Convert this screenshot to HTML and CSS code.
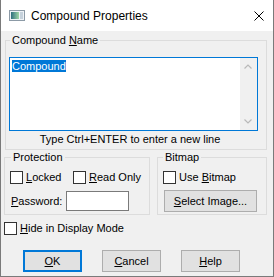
FILE: index.html
```html
<!DOCTYPE html>
<html lang="en">

<head>
    <meta charset="UTF-8">
    <title>Compound Properties</title>

    <!-- Styles -->
    <link rel="stylesheet" href="styles.css">
</head>
<body>

    <div class="window">

        <!-- Title bar -->
        <header class="titlebar">
            <svg class="app-icon" width="16" height="11" viewBox="0 0 16 11">
                <defs>
                    <linearGradient id="pane" x1="0" y1="0" x2="1" y2="0">
                        <stop offset="0" stop-color="#2f6f7f" />
                        <stop offset="1" stop-color="#9fd6a6" />
                    </linearGradient>
                </defs>
                <rect x="0.5" y="0.5" width="15" height="10" fill="#eef2f6" stroke="#8c9aa6" />
                <rect x="2" y="2" width="8" height="7" fill="url(#pane)" />
                <rect x="11" y="2" width="3" height="7" fill="#c6d2dc" />
            </svg>
            <span class="title">Compound Properties</span>
            <svg class="close" width="10" height="10" viewBox="0 0 10 10">
                <path d="M0.5 0.5 L9.5 9.5 M9.5 0.5 L0.5 9.5" stroke="#000" stroke-width="1" fill="none" />
            </svg>
        </header>

        <div class="client">

            <!-- Name -->
            <fieldset class="group name-group">
                <legend>Compound <u>N</u>ame</legend>
                <div class="textbox">
                    <div class="textbox-text"><span class="selected">Compound</span></div>
                    <div class="scrollbar">
                        <svg width="17" height="17" viewBox="0 0 17 17">
                            <path d="M4.5 10.5 L8 7 L11.5 10.5" stroke="#b9b9b9" stroke-width="1.2" fill="none" />
                        </svg>
                        <svg width="17" height="17" viewBox="0 0 17 17">
                            <path d="M4.5 6.5 L8 10 L11.5 6.5" stroke="#b9b9b9" stroke-width="1.2" fill="none" />
                        </svg>
                    </div>
                </div>
                <p class="hint">Type Ctrl+ENTER to enter a new line</p>
            </fieldset>

            <div class="group-row">

                <!-- Protection -->
                <fieldset class="group protection">
                    <legend>Protection</legend>
                    <div class="check-row">
                        <label class="check locked"><span class="box"></span><span><u>L</u>ocked</span></label>
                        <label class="check"><span class="box"></span><span><u>R</u>ead Only</span></label>
                    </div>
                    <div class="password-row">
                        <span class="field-label"><u>P</u>assword:</span>
                        <span class="input"></span>
                    </div>
                </fieldset>

                <!-- Bitmap -->
                <fieldset class="group bitmap">
                    <legend>Bitmap</legend>
                    <div class="check-row">
                        <label class="check"><span class="box"></span><span>Use <u>B</u>itmap</span></label>
                    </div>
                    <button class="btn select-btn"><u>S</u>elect Image...</button>
                </fieldset>
            </div>

            <label class="check hide-check"><span class="box"></span><span><u>H</u>ide in Display Mode</span></label>

            <!-- Dialog buttons -->
            <div class="buttons">
                <button class="btn default"><u>O</u>K</button>
                <button class="btn"><u>C</u>ancel</button>
                <button class="btn"><u>H</u>elp</button>
            </div>
        </div>
    </div>

</body>
</html>
```

FILE: styles.css
```css
:root {
    --face: #f0f0f0;
    --group-border: #dcdcdc;
    --accent: #0078d7;
    --frame: #7a7a7a;
}

* {
    box-sizing: border-box;
    margin: 0;
    padding: 0;
}

body {
    font-family: "Liberation Sans", Arial, sans-serif;
    font-size: 11px;
    line-height: 13px;
    color: #000;
    background: #fff;
}

.window {
    width: 274px;
    height: 277px;
    border: 1px solid var(--frame);
    border-top: none;
    display: flex;
    flex-direction: column;
}

/* Title bar */
.titlebar {
    height: 31px;
    flex-shrink: 0;
    background: #fff;
    display: flex;
    align-items: center;
}

.app-icon {
    margin-left: 8px;
}

.title {
    margin-left: 6px;
    font-size: 12px;
    line-height: 16px;
}

.close {
    margin-left: auto;
    margin-right: 9px;
}

/* Client area */
.client {
    flex: 1;
    background: var(--face);
    padding: 3px 6px 0 3px;
    display: flex;
    flex-direction: column;
}

.group {
    border: 1px solid var(--group-border);
    min-width: 0;
}

.group legend {
    padding: 0 2px;
}

.name-group {
    margin-left: 1px;
    padding: 0 8px 3px 3px;
}

.name-group legend {
    margin-left: 1px;
}

.textbox {
    margin-top: 10px;
    height: 74px;
    border: 1px solid var(--accent);
    background: #fff;
    display: flex;
}

.textbox-text {
    flex: 1;
    padding: 2px;
}

.selected {
    background: var(--accent);
    color: #fff;
}

.scrollbar {
    width: 17px;
    background: var(--face);
    display: flex;
    flex-direction: column;
    justify-content: space-between;
}

.scrollbar svg {
    display: block;
}

.hint {
    margin-top: 2px;
    text-align: center;
    padding-right: 7px;
}

.group-row {
    display: flex;
    gap: 7px;
    margin-top: 1px;
}

.protection {
    width: 146px;
    padding: 0 4px 3px 5px;
}

.protection legend {
    margin-left: 1px;
}

.bitmap {
    flex: 1;
    padding: 0 4px 2px 5px;
}

.check-row {
    display: flex;
    margin-top: 7px;
}

.check {
    display: flex;
    align-items: center;
    gap: 3px;
}

.check.locked {
    width: 63px;
}

.box {
    width: 13px;
    height: 13px;
    border: 1px solid #333;
    background: #fff;
}

.password-row {
    display: flex;
    align-items: center;
    margin-top: 7px;
}

.field-label {
    width: 56px;
    padding-left: 1px;
}

.input {
    width: 63px;
    height: 20px;
    border: 1px solid var(--frame);
    background: #fff;
}

.btn {
    height: 22px;
    width: 59px;
    border: 1px solid #adadad;
    background: #e1e1e1;
    font: inherit;
    color: #000;
}

.btn.default {
    border: 2px solid var(--accent);
}

.select-btn {
    display: block;
    width: 93px;
    margin: 6px 0 0 1px;
}

.hide-check {
    margin-top: 7px;
}

.buttons {
    display: flex;
    gap: 20px;
    margin-top: 15px;
    padding-left: 19px;
}
```
